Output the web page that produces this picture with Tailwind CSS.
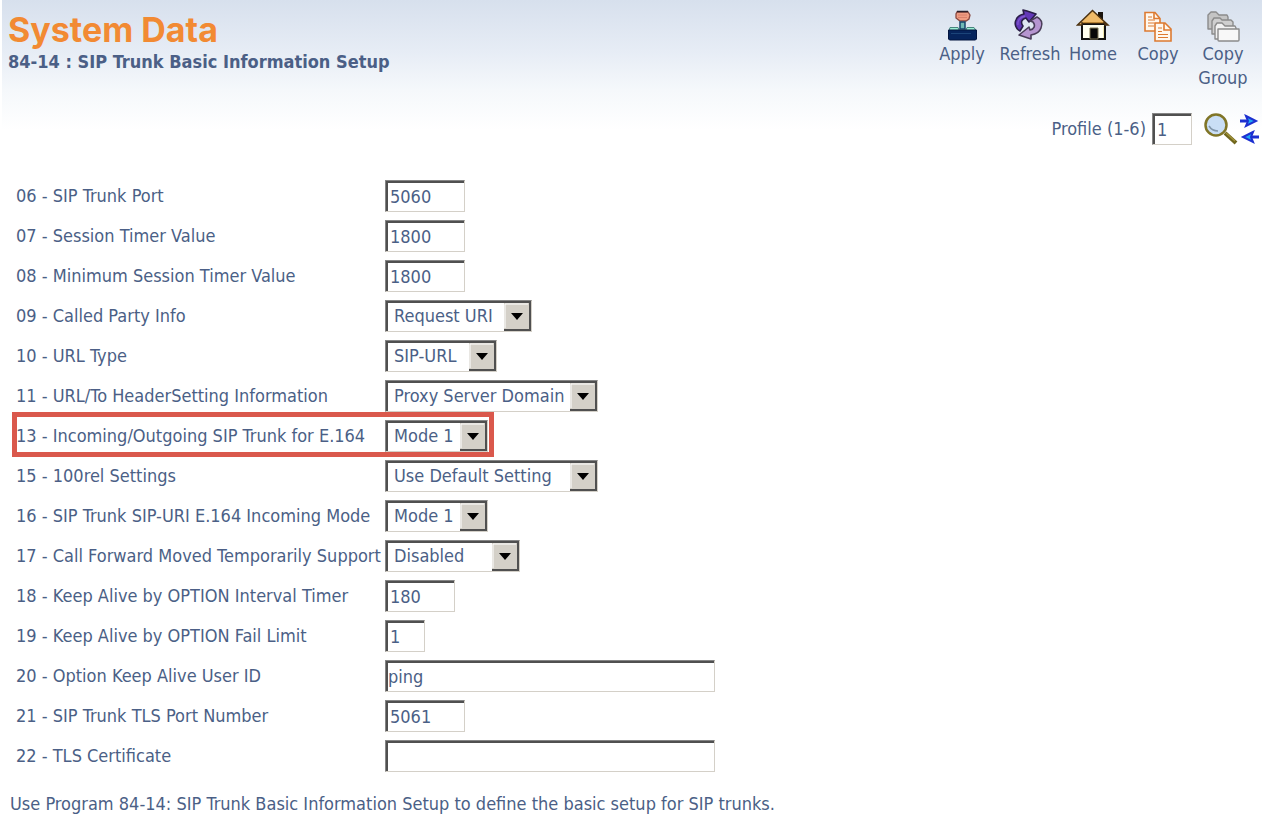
<!DOCTYPE html>
<html lang="en">
<head>
<meta charset="utf-8">
<meta name="viewport" content="width=device-width, initial-scale=1">
<title>System Data</title>
<script src="https://cdn.jsdelivr.net/npm/@tailwindcss/browser@4"></script>
</head>
<body class="bg-white font-['DejaVu_Sans_Condensed','DejaVu_Sans',sans-serif] text-lg leading-6 text-[#4b5f86]">
<div class="ml-0.5 mr-1.5 min-h-screen bg-[linear-gradient(to_bottom,#d7e0ed_0px,#e6ecf5_50px,#f5f8fb_90px,#ffffff_130px)]">
<header class="flex h-[105px] items-start justify-between pr-2.5">
  <div class="pl-1.5 pt-2.5">
    <h1 class="font-[Inter,sans-serif] text-[34px] font-bold leading-10 text-[#f28a33]">System Data</h1>
    <p class="font-bold">84-14 : SIP Trunk Basic Information Setup</p>
  </div>
  <nav class="flex pt-2 text-center" aria-label="Page actions">
    <button type="button" class="flex w-[68px] flex-col items-center">
      <svg class="h-[34px] w-[34px]" viewBox="0 0 34 34" aria-hidden="true">
        <path d="M12 4h11l2 3-1 4-3 2h-6l-4-3V6z" fill="#ef9c82" stroke="#8a4a42" stroke-width="1.300"/>
        <path d="M13 7h9M13 9.500h9" stroke="#d97f6a"/>
        <path d="M12 3.500h11" stroke="#2b1f2a" stroke-width="1.500"/>
        <path d="M15 14h5v7h-5z" fill="#6fb9b4" stroke="#16446b" stroke-width="1.500"/>
        <path d="M5 19.500h8l1 2.500h7l1-2.500h7l2 3H4z" fill="#9df0d4" stroke="#47867f"/>
        <path d="M3.500 22h28v9l-1 1h-26l-1-1z" fill="#06245c" stroke="#03143f"/>
        <path d="M6 25.500h20" fill="none" stroke="#1b4479"/>
      </svg>
      <span>Apply</span>
    </button>
    <button type="button" class="flex w-[68px] flex-col items-center">
      <svg class="h-[34px] w-[34px]" viewBox="0 0 34 34" stroke-width="1.600" stroke-linejoin="round" aria-hidden="true">
        <path d="M7 23C3 21 1 16 3 12c1-3 3-5 8-6l-1-4 4 1 9 3-7 8-3-4c-4 1-6 4-3 8z" fill="#6338b8" stroke="#2a1d48"/>
        <path d="M24 9c4 2 6 6 4 11-1 3-4 6-10 7v4L6 27l10-8 1 3c4-1 6-4 3-8l-3-1z" fill="#b695d0" stroke="#4a3d59"/>
        <path d="M5 17c-1-4 2-8 7-9" fill="none" stroke="#8059cf" stroke-width="1.300"/>
      </svg>
      <span>Refresh</span>
    </button>
    <button type="button" class="flex w-[58px] flex-col items-center">
      <svg class="h-[34px] w-[34px]" viewBox="0 0 34 34" aria-hidden="true">
        <path d="M22 4h5v10h-5z" fill="#19130d"/>
        <path d="M6 16h23v15H6z" fill="#fffff0" stroke="#111" stroke-width="2"/>
        <path d="M1.500 17 16.500 2.500 32 17h-3v-2H6v2z" fill="#f0bb68" stroke="#4b3110" stroke-width="1.500"/>
        <path d="M7 14.500h20" stroke="#b78232"/>
        <path d="M14 20h8v11h-8z" fill="#080808" stroke="#7a7252"/>
        <path d="M27.500 18v12" stroke="#efe6ad"/>
      </svg>
      <span>Home</span>
    </button>
    <button type="button" class="flex w-[72px] flex-col items-center">
      <svg class="h-[34px] w-[34px]" viewBox="0 0 34 34" fill="#fff8ef" stroke="#dd7a31" stroke-width="1.600" aria-hidden="true">
        <path d="M4 4.500h10l5 6V23H4z"/>
        <path d="M13 4.500v6h6" fill="none"/>
        <path d="M7 9h4M7 12h7M7 15h6M7 18h6" stroke-width="1.200"/>
        <path d="M14 15h10l6 6v12H14z"/>
        <path d="M23 15v7h7" fill="none"/>
        <path d="M17 20h4M17 23.500h4M17 26.500h10M17 29.500h10" stroke-width="1.200"/>
      </svg>
      <span>Copy</span>
    </button>
    <button type="button" class="flex w-[58px] flex-col items-center">
      <svg class="h-[34px] w-[34px]" viewBox="0 0 34 34" stroke="#8b8b8b" stroke-width="1.400" stroke-linejoin="round" aria-hidden="true">
        <path d="M2 21V7l3-3h5l3 3h8l1 2v12z" fill="#c4c4c4"/>
        <path d="M6 26V13l2-3h6l2 2h9l2 2v12z" fill="#cfcfcf"/>
        <path d="M9 31V18l2-3h5l3 3h10l1 2v11z" fill="#f2f2f2"/>
        <path d="M12 21h21v11q0 1-1 1H13q-1 0-1-1z" fill="#f8f8f8"/>
      </svg>
      <span>Copy Group</span>
    </button>
  </nav>
</header>

<form>
  <div class="flex h-12 items-center justify-end pr-0.5">
    <label for="profile">Profile (1-6)</label>
    <input id="profile" value="1" class="ml-1.5 h-8 w-10 border border-b-[#d4d0c8] border-l-[#858585] border-r-[#d4d0c8] border-t-[#858585] bg-white pl-1 shadow-[inset_2px_2px_0_#505050] outline-none">
    <button type="button" class="ml-3 h-8 w-9" aria-label="Search">
      <svg class="h-8 w-9" viewBox="0 0 36 32" aria-hidden="true">
        <circle cx="12" cy="12" r="10.500" fill="#c9def5" stroke="#807527" stroke-width="2.500"/>
        <path d="M5 13q3 5 9 5" fill="none" stroke="#8195a9" stroke-width="1.500"/>
        <path d="m21 20 11 10" stroke="#70661d" stroke-width="4"/>
        <path d="m22 20 9 8" stroke="#a5963a" stroke-width="1.200"/>
      </svg>
    </button>
    <button type="button" class="h-8 w-5" aria-label="Switch profile">
      <svg class="h-8 w-5" viewBox="0 0 20 32" fill="#20a8f5" stroke="#1c2fd0" stroke-width="2" aria-hidden="true">
        <path d="M0 8h8M19 24h-8" stroke-width="3"/>
        <path d="M6 3 16 8 6 13l2-5z"/>
        <path d="M13 19 3 24l10 5-2-5z"/>
      </svg>
    </button>
  </div>

  <div class="pl-3.5 pt-[23px]">
    <div class="flex h-10 items-center">
      <label for="f06" class="w-[369px] shrink-0">06 - SIP Trunk Port</label>
      <input id="f06" value="5060" class="h-8 w-20 border border-b-[#d4d0c8] border-l-[#858585] border-r-[#d4d0c8] border-t-[#858585] bg-white pl-1 shadow-[inset_2px_2px_0_#505050] outline-none">
    </div>
    <div class="flex h-10 items-center">
      <label for="f07" class="w-[369px] shrink-0">07 - Session Timer Value</label>
      <input id="f07" value="1800" class="h-8 w-20 border border-b-[#d4d0c8] border-l-[#858585] border-r-[#d4d0c8] border-t-[#858585] bg-white pl-1 shadow-[inset_2px_2px_0_#505050] outline-none">
    </div>
    <div class="flex h-10 items-center">
      <label for="f08" class="w-[369px] shrink-0">08 - Minimum Session Timer Value</label>
      <input id="f08" value="1800" class="h-8 w-20 border border-b-[#d4d0c8] border-l-[#858585] border-r-[#d4d0c8] border-t-[#858585] bg-white pl-1 shadow-[inset_2px_2px_0_#505050] outline-none">
    </div>
    <div class="flex h-10 items-center">
      <label for="f09" class="w-[369px] shrink-0">09 - Called Party Info</label>
      <div class="relative">
        <select id="f09" class="block h-8 w-[147px] appearance-none border border-b-[#d4d0c8] border-l-[#858585] border-r-[#d4d0c8] border-t-[#858585] bg-white pl-2 shadow-[inset_2px_2px_0_#505050] outline-none"><option>Request URI</option></select>
        <svg class="pointer-events-none absolute bottom-px right-px h-7 w-[27px]" viewBox="0 0 27 28" aria-hidden="true"><path d="M0 0h27v28H0z" fill="#505050"/><path d="M0 0h25v26H0z" fill="#d4d0c8"/><path d="M1 25V1h23" fill="none" stroke="#fff"/><path d="M7 10h12l-6 7z" fill="#000"/></svg>
      </div>
    </div>
    <div class="flex h-10 items-center">
      <label for="f10" class="w-[369px] shrink-0">10 - URL Type</label>
      <div class="relative">
        <select id="f10" class="block h-8 w-[112px] appearance-none border border-b-[#d4d0c8] border-l-[#858585] border-r-[#d4d0c8] border-t-[#858585] bg-white pl-2 shadow-[inset_2px_2px_0_#505050] outline-none"><option>SIP-URL</option></select>
        <svg class="pointer-events-none absolute bottom-px right-px h-7 w-[27px]" viewBox="0 0 27 28" aria-hidden="true"><path d="M0 0h27v28H0z" fill="#505050"/><path d="M0 0h25v26H0z" fill="#d4d0c8"/><path d="M1 25V1h23" fill="none" stroke="#fff"/><path d="M7 10h12l-6 7z" fill="#000"/></svg>
      </div>
    </div>
    <div class="flex h-10 items-center">
      <label for="f11" class="w-[369px] shrink-0">11 - URL/To HeaderSetting Information</label>
      <div class="relative">
        <select id="f11" class="block h-8 w-[213px] appearance-none border border-b-[#d4d0c8] border-l-[#858585] border-r-[#d4d0c8] border-t-[#858585] bg-white pl-2 shadow-[inset_2px_2px_0_#505050] outline-none"><option>Proxy Server Domain</option></select>
        <svg class="pointer-events-none absolute bottom-px right-px h-7 w-[27px]" viewBox="0 0 27 28" aria-hidden="true"><path d="M0 0h27v28H0z" fill="#505050"/><path d="M0 0h25v26H0z" fill="#d4d0c8"/><path d="M1 25V1h23" fill="none" stroke="#fff"/><path d="M7 10h12l-6 7z" fill="#000"/></svg>
      </div>
    </div>
    <div class="relative flex h-10 w-fit items-center">
      <label for="f13" class="w-[369px] shrink-0">13 - Incoming/Outgoing SIP Trunk for E.164</label>
      <div class="relative">
        <select id="f13" class="block h-8 w-[103px] appearance-none border border-b-[#d4d0c8] border-l-[#858585] border-r-[#d4d0c8] border-t-[#858585] bg-white pl-2 shadow-[inset_2px_2px_0_#505050] outline-none"><option>Mode 1</option></select>
        <svg class="pointer-events-none absolute bottom-px right-px h-7 w-[27px]" viewBox="0 0 27 28" aria-hidden="true"><path d="M0 0h27v28H0z" fill="#505050"/><path d="M0 0h25v26H0z" fill="#d4d0c8"/><path d="M1 25V1h23" fill="none" stroke="#fff"/><path d="M7 10h12l-6 7z" fill="#000"/></svg>
      </div>
      <div class="pointer-events-none absolute -bottom-px -left-1 -right-1.5 -top-1 border-[5px] border-[#da584c]"></div>
    </div>
    <div class="flex h-10 items-center">
      <label for="f15" class="w-[369px] shrink-0">15 - 100rel Settings</label>
      <div class="relative">
        <select id="f15" class="block h-8 w-[213px] appearance-none border border-b-[#d4d0c8] border-l-[#858585] border-r-[#d4d0c8] border-t-[#858585] bg-white pl-2 shadow-[inset_2px_2px_0_#505050] outline-none"><option>Use Default Setting</option></select>
        <svg class="pointer-events-none absolute bottom-px right-px h-7 w-[27px]" viewBox="0 0 27 28" aria-hidden="true"><path d="M0 0h27v28H0z" fill="#505050"/><path d="M0 0h25v26H0z" fill="#d4d0c8"/><path d="M1 25V1h23" fill="none" stroke="#fff"/><path d="M7 10h12l-6 7z" fill="#000"/></svg>
      </div>
    </div>
    <div class="flex h-10 items-center">
      <label for="f16" class="w-[369px] shrink-0">16 - SIP Trunk SIP-URI E.164 Incoming Mode</label>
      <div class="relative">
        <select id="f16" class="block h-8 w-[103px] appearance-none border border-b-[#d4d0c8] border-l-[#858585] border-r-[#d4d0c8] border-t-[#858585] bg-white pl-2 shadow-[inset_2px_2px_0_#505050] outline-none"><option>Mode 1</option></select>
        <svg class="pointer-events-none absolute bottom-px right-px h-7 w-[27px]" viewBox="0 0 27 28" aria-hidden="true"><path d="M0 0h27v28H0z" fill="#505050"/><path d="M0 0h25v26H0z" fill="#d4d0c8"/><path d="M1 25V1h23" fill="none" stroke="#fff"/><path d="M7 10h12l-6 7z" fill="#000"/></svg>
      </div>
    </div>
    <div class="flex h-10 items-center">
      <label for="f17" class="w-[369px] shrink-0">17 - Call Forward Moved Temporarily Support</label>
      <div class="relative">
        <select id="f17" class="block h-8 w-[135px] appearance-none border border-b-[#d4d0c8] border-l-[#858585] border-r-[#d4d0c8] border-t-[#858585] bg-white pl-2 shadow-[inset_2px_2px_0_#505050] outline-none"><option>Disabled</option></select>
        <svg class="pointer-events-none absolute bottom-px right-px h-7 w-[27px]" viewBox="0 0 27 28" aria-hidden="true"><path d="M0 0h27v28H0z" fill="#505050"/><path d="M0 0h25v26H0z" fill="#d4d0c8"/><path d="M1 25V1h23" fill="none" stroke="#fff"/><path d="M7 10h12l-6 7z" fill="#000"/></svg>
      </div>
    </div>
    <div class="flex h-10 items-center">
      <label for="f18" class="w-[369px] shrink-0">18 - Keep Alive by OPTION Interval Timer</label>
      <input id="f18" value="180" class="h-8 w-[70px] border border-b-[#d4d0c8] border-l-[#858585] border-r-[#d4d0c8] border-t-[#858585] bg-white pl-1 shadow-[inset_2px_2px_0_#505050] outline-none">
    </div>
    <div class="flex h-10 items-center">
      <label for="f19" class="w-[369px] shrink-0">19 - Keep Alive by OPTION Fail Limit</label>
      <input id="f19" value="1" class="h-8 w-10 border border-b-[#d4d0c8] border-l-[#858585] border-r-[#d4d0c8] border-t-[#858585] bg-white pl-1 shadow-[inset_2px_2px_0_#505050] outline-none">
    </div>
    <div class="flex h-10 items-center">
      <label for="f20" class="w-[369px] shrink-0">20 - Option Keep Alive User ID</label>
      <input id="f20" value="ping" class="h-8 w-[330px] border border-b-[#d4d0c8] border-l-[#858585] border-r-[#d4d0c8] border-t-[#858585] bg-white pl-0.5 shadow-[inset_2px_2px_0_#505050] outline-none">
    </div>
    <div class="flex h-10 items-center">
      <label for="f21" class="w-[369px] shrink-0">21 - SIP Trunk TLS Port Number</label>
      <input id="f21" value="5061" class="h-8 w-20 border border-b-[#d4d0c8] border-l-[#858585] border-r-[#d4d0c8] border-t-[#858585] bg-white pl-1 shadow-[inset_2px_2px_0_#505050] outline-none">
    </div>
    <div class="flex h-10 items-center">
      <label for="f22" class="w-[369px] shrink-0">22 - TLS Certificate</label>
      <input id="f22" value="" class="h-8 w-[330px] border border-b-[#d4d0c8] border-l-[#858585] border-r-[#d4d0c8] border-t-[#858585] bg-white pl-1 shadow-[inset_2px_2px_0_#505050] outline-none">
    </div>
  </div>
</form>
<p class="pl-2 pt-4">Use Program 84-14: SIP Trunk Basic Information Setup to define the basic setup for SIP trunks.</p>
</div>
</body>
</html>
